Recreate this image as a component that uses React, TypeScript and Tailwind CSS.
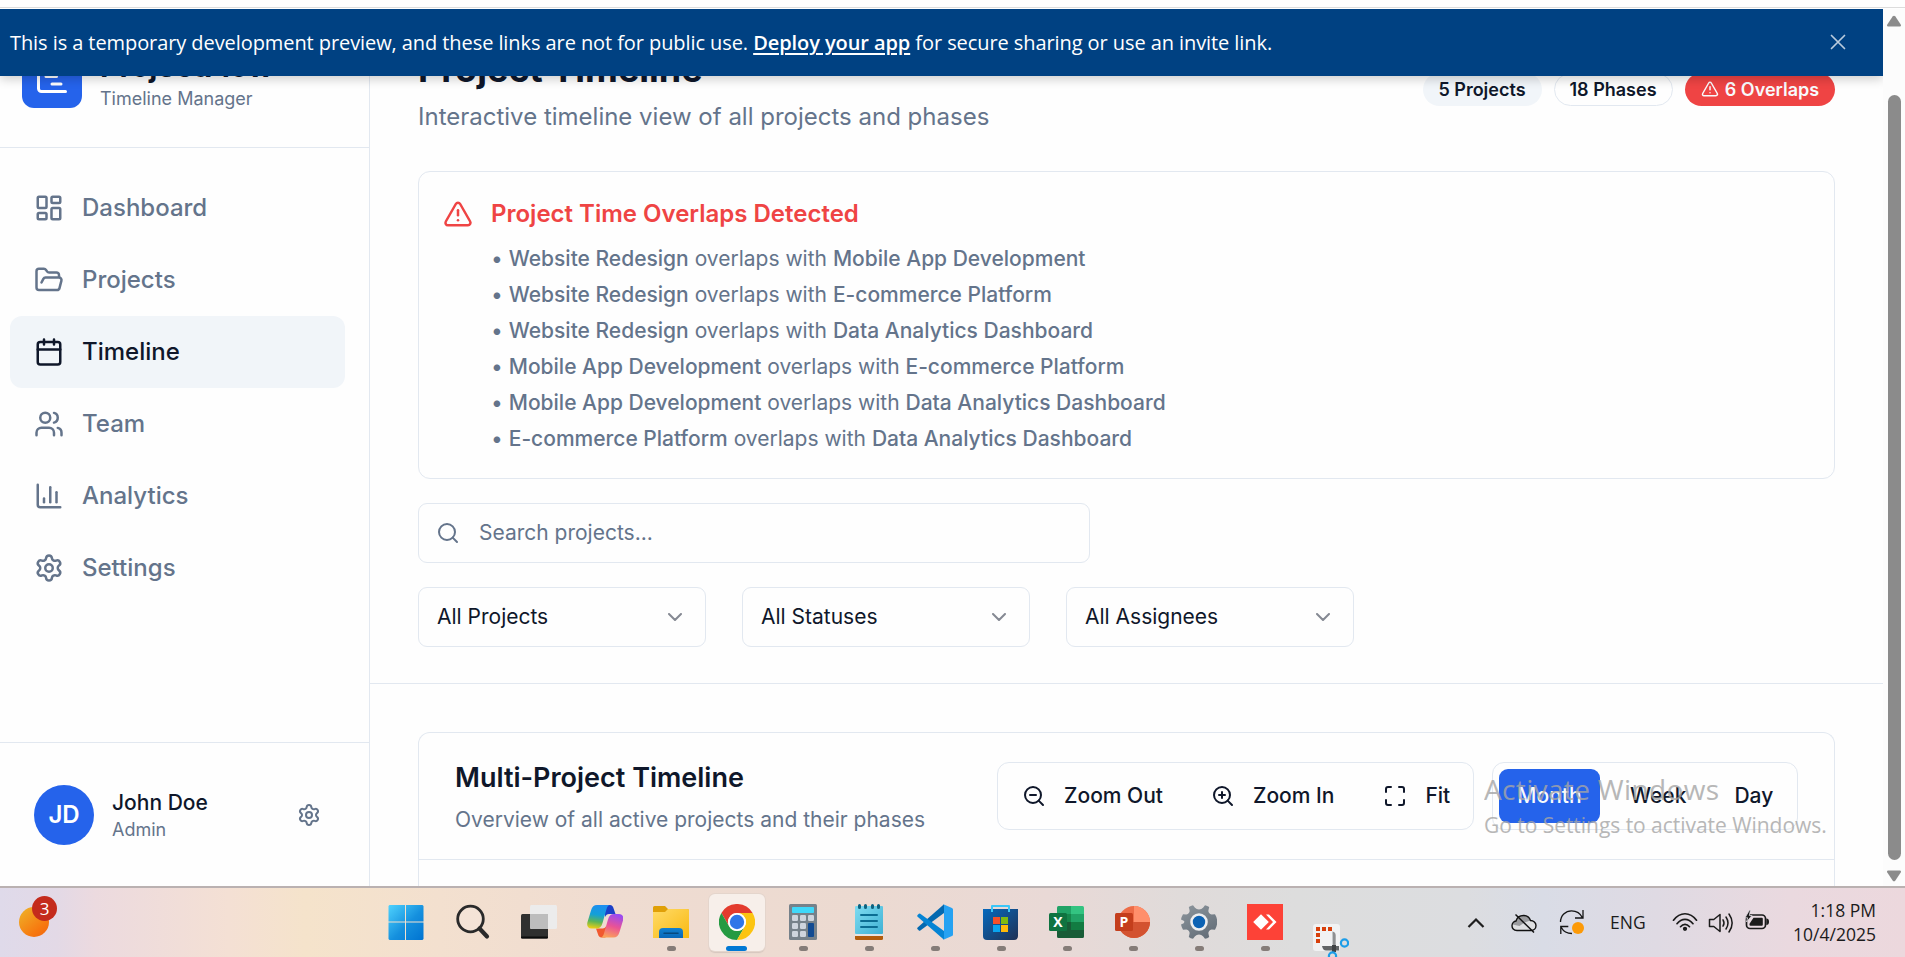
import type { ReactNode } from "react";
import {
  ChartColumn,
  ChevronDown,
  FolderOpen,
  LayoutDashboard,
  Maximize,
  Search,
  Settings,
  TriangleAlert,
  Users,
  ZoomIn,
  ZoomOut,
} from "lucide-react";

const overlaps: [string, string][] = [
  ["Website Redesign", "Mobile App Development"],
  ["Website Redesign", "E-commerce Platform"],
  ["Website Redesign", "Data Analytics Dashboard"],
  ["Mobile App Development", "E-commerce Platform"],
  ["Mobile App Development", "Data Analytics Dashboard"],
  ["E-commerce Platform", "Data Analytics Dashboard"],
];

function CalendarIcon() {
  return (
    <svg width="30" height="30" viewBox="0 0 24 24" fill="none" stroke="currentColor" strokeWidth="2" strokeLinecap="round" strokeLinejoin="round">
      <path d="M8 2v4M16 2v4M3 10h18" />
      <rect width="18" height="18" x="3" y="4" rx="2" />
    </svg>
  );
}

function NavItem({ icon, label, active = false }: { icon: ReactNode; label: string; active?: boolean }) {
  return (
    <div
      className={`flex h-[72px] w-[335px] items-center gap-[18px] rounded-[12px] pl-6 text-[24px] font-medium ${
        active ? "bg-[#f1f5f9] text-[#0f172a]" : "text-[#64748b]"
      }`}
    >
      {icon}
      <span>{label}</span>
    </div>
  );
}

function Sidebar() {
  return (
    <aside className="flex h-full w-[370px] shrink-0 flex-col border-r border-[#e2e8f0]">
      <div className="flex h-[139px] shrink-0 items-center gap-[18px] border-b border-[#e2e8f0] pl-[22px]">
        <div className="flex h-[60px] w-[60px] items-center justify-center rounded-[12px] bg-[#2563eb] text-white">
          <svg width="36" height="36" viewBox="0 0 24 24" fill="none" stroke="currentColor" strokeWidth="2" strokeLinecap="round" strokeLinejoin="round">
            <path d="M3 3v16a2 2 0 0 0 2 2h16" />
            <path d="M10 6h8M8 11h7M12 16h6" />
          </svg>
        </div>
        <div className="flex flex-col">
          <span className="text-[30px] leading-[42px] font-bold text-[#0f172a]">ProjectFlow</span>
          <span className="text-[18px] leading-[24px] text-[#64748b]">Timeline Manager</span>
        </div>
      </div>
      <nav className="flex flex-1 flex-col pt-6 pl-[10px]">
        <NavItem icon={<LayoutDashboard size={30} />} label="Dashboard" />
        <NavItem icon={<FolderOpen size={30} />} label="Projects" />
        <NavItem icon={<CalendarIcon />} label="Timeline" active />
        <NavItem icon={<Users size={30} />} label="Team" />
        <NavItem icon={<ChartColumn size={30} />} label="Analytics" />
        <NavItem icon={<Settings size={30} />} label="Settings" />
      </nav>
      <div className="flex h-[144px] shrink-0 items-center border-t border-[#e2e8f0] pr-[48px] pl-[34px]">
        <div className="flex h-[60px] w-[60px] items-center justify-center rounded-full bg-[#2563eb] text-[24px] font-semibold text-white">JD</div>
        <div className="ml-[18px] flex flex-1 flex-col">
          <span className="text-[21px] leading-[30px] font-medium text-[#0f172a]">John Doe</span>
          <span className="text-[18px] leading-[24px] text-[#64748b]">Admin</span>
        </div>
        <Settings size={24} className="text-[#64748b]" />
      </div>
    </aside>
  );
}

function SelectBox({ label }: { label: string }) {
  return (
    <div className="flex h-[60px] w-[288px] items-center justify-between rounded-[9px] border border-[#e2e8f0] pr-[18px] pl-[18px] text-[21px] text-[#0f172a]">
      <span>{label}</span>
      <ChevronDown size={24} className="opacity-50" />
    </div>
  );
}

function MainArea() {
  return (
    <main className="flex min-w-0 flex-1 flex-col">
      <header className="flex h-[675px] shrink-0 flex-col border-b border-[#e2e8f0] pt-[36px] pr-[48px] pl-[48px]">
        <div className="flex items-center justify-between">
          <div className="flex flex-col gap-[6px]">
            <h1 className="text-[36px] leading-[48px] font-bold text-[#0f172a]">Project Timeline</h1>
            <p className="text-[24px] leading-[36px] text-[#64748b]">Interactive timeline view of all projects and phases</p>
          </div>
          <div className="flex items-center gap-[12px] pb-[2px] text-[18px] font-semibold text-[#0f172a]">
            <span className="flex h-[33px] w-[119px] items-center justify-center rounded-full bg-[#f1f5f9] pr-[1px]">5 Projects</span>
            <span className="flex h-[33px] w-[119px] items-center justify-center rounded-full border border-[#e2e8f0] pr-[1px]">18 Phases</span>
            <span className="flex h-[33px] w-[150px] items-center justify-center gap-[6px] rounded-full bg-[#ef4444] text-[#f8fafc]">
              <TriangleAlert size={18} />
              6 Overlaps
            </span>
          </div>
        </div>

        <section className="mt-[36px] flex h-[308px] gap-[18px] rounded-[12px] border border-[#e2e8f0] pt-[27px] pl-[24px]">
          <TriangleAlert size={30} className="shrink-0 text-[#ef4444]" />
          <div className="flex flex-col">
            <h2 className="text-[24px] leading-[30px] font-semibold text-[#ef4444]">Project Time Overlaps Detected</h2>
            <ul className="mt-[15px] flex flex-col gap-[6px] text-[21px] leading-[30px] text-[#64748b]">
              {overlaps.map(([a, b]) => (
                <li key={a + b}>
                  • <span className="font-medium">{a}</span> overlaps with <span className="font-medium">{b}</span>
                </li>
              ))}
            </ul>
          </div>
        </section>

        <div className="mt-6 flex h-[60px] w-[672px] items-center gap-[19px] rounded-[9px] border border-[#e2e8f0] pl-[17px] text-[21px] text-[#64748b]">
          <Search size={24} />
          <span>Search projects...</span>
        </div>

        <div className="mt-6 flex gap-[36px]">
          <SelectBox label="All Projects" />
          <SelectBox label="All Statuses" />
          <SelectBox label="All Assignees" />
        </div>
      </header>

      <div className="flex flex-1 flex-col pt-[48px] pr-[48px] pl-[48px]">
        <div className="flex h-[180px] flex-col rounded-t-[12px] border border-b-0 border-[#e2e8f0]">
          <div className="flex h-[127px] items-center justify-between border-b border-[#e2e8f0] px-[36px]">
            <div className="flex flex-col gap-[6px]">
              <h2 className="text-[27px] leading-[42px] font-semibold text-[#0f172a]">Multi-Project Timeline</h2>
              <p className="text-[21px] leading-[30px] text-[#64748b]">Overview of all active projects and their phases</p>
            </div>
            <div className="flex gap-[18px] text-[21px] font-medium text-[#0f172a]">
              <div className="flex h-[68px] w-[477px] items-center rounded-[12px] border border-[#e2e8f0] pl-[24px]">
                <ZoomOut size={24} />
                <span className="ml-[18px]">Zoom Out</span>
                <ZoomIn size={24} className="ml-[48px]" />
                <span className="ml-[18px]">Zoom In</span>
                <Maximize size={24} className="ml-[49px]" />
                <span className="ml-[18px]">Fit</span>
              </div>
              <div className="flex h-[68px] w-[306px] items-center rounded-[12px] border border-[#e2e8f0] pl-[6px]">
                <span className="flex h-[54px] w-[101px] items-center justify-center rounded-[9px] bg-[#2563eb] text-[#f8fafc]">Month</span>
                <span className="ml-[30px]">Week</span>
                <span className="ml-[48px]">Day</span>
              </div>
            </div>
          </div>
        </div>
      </div>
    </main>
  );
}

function Banner() {
  return (
    <div className="absolute top-0 left-0 flex h-[67px] w-full items-center justify-between bg-[#004182] pr-[37px] pl-[10px] font-['Open_Sans',sans-serif] text-[20px] tracking-[-0.08px] text-white shadow-[0_3px_10px_rgba(0,0,0,0.2)]">
      <p className="pt-[1px]">
        This is a temporary development preview, and these links are not for public use.{" "}
        <span className="font-semibold underline decoration-2 underline-offset-[3px]">Deploy your app</span> for secure sharing or use an invite link.
      </p>
      <svg width="16" height="16" viewBox="0 0 16 16" fill="none" stroke="#b9cbdd" strokeWidth="1.700" strokeLinecap="round" className="mb-[2px]">
        <path d="M1.500 1.500l13 13M14.500 1.500l-13 13" />
      </svg>
    </div>
  );
}

function ScrollBar() {
  return (
    <div className="flex w-[22px] shrink-0 flex-col items-center bg-[#fcfcfc] pt-[6px]">
      <svg width="16" height="13" viewBox="0 0 16 13" fill="#8b8b8b">
        <path d="M6.600 1.500q1.400-1.700 2.800 0l5.300 7.900q.9 2-1 2.100h-11.400q-1.900-.1-1-2.100z" />
      </svg>
      <div className="mt-[67px] h-[765px] w-[13px] rounded-full bg-[#8b8b8b]" />
      <svg width="16" height="13" viewBox="0 0 16 13" fill="#8b8b8b" className="mt-[9px]">
        <path d="M6.600 11.500q1.400 1.700 2.800 0l5.300-7.900q.9-2-1-2.100h-11.400q-1.900.1-1 2.100z" />
      </svg>
    </div>
  );
}

function WindowsIcon() {
  return (
    <svg width="36" height="36" viewBox="0 0 36 36" className="mr-[3px]">
      <defs>
        <linearGradient id="win" x1="0" y1="0" x2="1" y2="1">
          <stop offset="0" stopColor="#4fd2fd" />
          <stop offset="0.55" stopColor="#1590de" />
          <stop offset="1" stopColor="#0073d1" />
        </linearGradient>
      </defs>
      <path fill="url(#win)" d="M1.500 1H17V17.500H.500V2zM18 1h16.500l1 1V17.500H18zM.500 18.500H17V36H1.500l-1-1zM18 18.500h17.500V35l-1 1H18z" />
    </svg>
  );
}

function SearchTaskIcon() {
  return (
    <svg width="36" height="36" viewBox="0 0 36 36" fill="none" stroke="#2a2a2a" className="mr-[2px]">
      <circle cx="16.500" cy="15" r="12.800" strokeWidth="2.800" fill="#fff" fillOpacity="0.15" />
      <path d="M25.500 24.500l7.500 8" strokeWidth="4.200" strokeLinecap="round" />
    </svg>
  );
}

function TaskViewIcon() {
  return (
    <svg width="36" height="36" viewBox="0 0 36 36">
      <rect x="0" y="10" width="27" height="24.500" rx="1.500" fill="#30302f" />
      <rect x="0" y="32.500" width="27" height="2" rx="1" fill="#0c0c0c" />
      <rect x="9" y="1" width="27" height="24" rx="1.500" fill="#ececec" />
      <path d="M9 10h18v15H10.500L9 23.500z" fill="#bdbdbd" />
    </svg>
  );
}

function CopilotIcon() {
  return (
    <svg width="36" height="36" viewBox="0 0 36 36">
      <defs>
        <linearGradient id="cpA" x1="0.4" y1="0" x2="0.25" y2="1">
          <stop offset="0" stopColor="#1d8ff0" />
          <stop offset="0.4" stopColor="#13a0d8" />
          <stop offset="0.7" stopColor="#5cb557" />
          <stop offset="1" stopColor="#f3d010" />
        </linearGradient>
        <linearGradient id="cpB" x1="0.6" y1="0" x2="0.3" y2="1">
          <stop offset="0" stopColor="#9a4bf0" />
          <stop offset="0.5" stopColor="#ea5395" />
          <stop offset="1" stopColor="#fba457" />
        </linearGradient>
      </defs>
      <path d="M18 1h5c2 0 3 1.500 3.600 3.500L28.500 10H22c-2 0-3 1-4 3z" fill="#1b40c8" />
      <path d="M18.500 33.500h-4c-2 0-3-1.500-3.600-3.500L9 24.500h6.500c2 0 3-1 4-3z" fill="#f1592f" />
      <path d="M10 1h13c-1.800 0-2.800 1.600-3.600 4.500L15.500 19c-1 3.800-3 5.500-6 5.500H4.500C.800 24.500-.500 21.500.500 18L4 6.500C5.100 2.800 7 1 10 1z" fill="url(#cpA)" />
      <path d="M26.500 33.500h-13c1.800 0 2.800-1.600 3.600-4.500L21 15.500c1-3.800 3-5.500 6-5.500h5c3.700 0 5 3 4 6.500L32.500 28c-1.100 3.700-3 5.500-6 5.500z" fill="url(#cpB)" />
    </svg>
  );
}

function ExplorerIcon() {
  return (
    <svg width="36" height="36" viewBox="0 0 36 36">
      <defs>
        <linearGradient id="fold" x1="0" y1="0" x2="1" y2="1">
          <stop offset="0" stopColor="#ffdb68" />
          <stop offset="1" stopColor="#f9b911" />
        </linearGradient>
        <linearGradient id="foldBlue" x1="0" y1="0" x2="0" y2="1">
          <stop offset="0" stopColor="#1281cf" />
          <stop offset="1" stopColor="#0a67b8" />
        </linearGradient>
      </defs>
      <path d="M0 3.500Q0 2 1.500 2H12l3 3h19.500Q36 5 36 6.500V12H0z" fill="#e0a008" />
      <path d="M0 8h12l3-3h19.500Q36 5 36 6.500V34H0z" fill="url(#fold)" />
      <path d="M6 34V28q0-4 4-4h16q4 0 4 4v6z" fill="url(#foldBlue)" />
      <path d="M11 29.300h14" stroke="#07497f" strokeWidth="1.500" strokeLinecap="round" />
    </svg>
  );
}

function ChromeIcon() {
  return (
    <svg width="36" height="36" viewBox="0 0 36 36">
      <path d="M18 9H33.600A18 18 0 0 0 2.400 9L10.200 22.500A9 9 0 0 1 18 9z" fill="#e33b2e" />
      <path d="M10.200 22.500L2.400 9A18 18 0 0 0 18 36L25.800 22.500A9 9 0 0 1 10.200 22.500z" fill="#259a42" />
      <path d="M25.800 22.500L18 36A18 18 0 0 0 33.600 9H18A9 9 0 0 1 25.800 22.500z" fill="#fcc411" />
      <circle cx="18" cy="18" r="9" fill="#fff" />
      <circle cx="18" cy="18" r="7.200" fill="#2f76e8" />
    </svg>
  );
}

function CalculatorIcon() {
  return (
    <svg width="36" height="36" viewBox="0 0 36 36">
      <rect x="4" y="0" width="28" height="36" rx="1.500" fill="#76818a" />
      <rect x="7" y="3" width="22" height="6" rx="0.800" fill="#3fd8fa" />
      <g fill="#ced4dd">
        <rect x="7" y="11" width="6" height="6" rx="1.200" />
        <rect x="15" y="11" width="6" height="6" rx="1.200" />
        <rect x="23" y="11" width="6" height="6" rx="1.200" />
        <rect x="7" y="19" width="6" height="6" rx="1.200" />
        <rect x="15" y="19" width="6" height="6" rx="1.200" />
        <rect x="7" y="27" width="6" height="6" rx="1.200" />
        <rect x="15" y="27" width="6" height="6" rx="1.200" />
      </g>
      <rect x="23" y="19" width="6" height="14" rx="1" fill="#114a92" />
    </svg>
  );
}

function NotepadIcon() {
  return (
    <svg width="36" height="36" viewBox="0 0 36 36">
      <defs>
        <linearGradient id="note" x1="0" y1="0" x2="1" y2="1">
          <stop offset="0" stopColor="#7fdcf1" />
          <stop offset="1" stopColor="#3fb1d4" />
        </linearGradient>
      </defs>
      <path d="M4 30h28v4.500q0 1.500-1.500 1.500h-25Q4 36 4 34.500z" fill="#b25c0c" />
      <rect x="4" y="28" width="28" height="4" fill="#e8e4e2" />
      <rect x="4" y="2" width="28" height="28" rx="1" fill="url(#note)" />
      <path d="M10 11h16M10 17h16M10 23h16" stroke="#0b6d93" strokeWidth="2" strokeLinecap="round" />
      <path d="M8.500 1.500v2M14.500 1.500v2M21.500 1.500v2M27.500 1.500v2" stroke="#0d6280" strokeWidth="3" strokeLinecap="round" />
    </svg>
  );
}

function VsCodeIcon() {
  return (
    <svg width="36" height="36" viewBox="0 0 36 36">
      <path d="M27 9V.200L.600 23.500q-.8.900 0 1.700l1.300 1.200q.7.500 1.400 0z" fill="#0469b0" />
      <path d="M27 27v8.700L.600 12.700q-.8-.9 0-1.700l1.300-1.200q.7-.5 1.400 0z" fill="#0584d4" />
      <path d="M26.300.300L35 4q1 .500 1 1.500v25q0 1-1 1.500l-8.700 3.700q.7-.5.700-1.700V2q0-1.200-.7-1.700z" fill="#26a2f2" />
    </svg>
  );
}

function StoreIcon() {
  return (
    <svg width="36" height="36" viewBox="0 0 36 36">
      <defs>
        <linearGradient id="store" x1="0" y1="0" x2="1" y2="1">
          <stop offset="0" stopColor="#0669bd" />
          <stop offset="1" stopColor="#1f3155" />
        </linearGradient>
      </defs>
      <path d="M0 5h35v27q0 4-4 4H4q-4 0-4-4z" fill="url(#store)" />
      <path d="M9 8V2h17v6" fill="none" stroke="#3bc6f7" strokeWidth="2" strokeLinejoin="round" />
      <rect x="10" y="13" width="7" height="7" fill="#f4502a" />
      <rect x="18" y="13" width="7" height="7" fill="#80ba10" />
      <rect x="10" y="21" width="7" height="7" fill="#09a4ef" />
      <rect x="18" y="21" width="7" height="7" fill="#ffb908" />
    </svg>
  );
}

function ExcelIcon() {
  return (
    <svg width="36" height="36" viewBox="0 0 36 36">
      <path d="M8 3.500Q8 2 9.500 2H22v8H8z" fill="#21a366" />
      <path d="M22 2h11.500Q35 2 35 3.500V10H22z" fill="#33c481" />
      <path d="M8 10h14v8H8z" fill="#16874b" />
      <path d="M22 10h13v8H22z" fill="#21a366" />
      <path d="M8 18h27v8H8z" fill="#127c42" />
      <path d="M8 18h14v8h13v6.500q0 1.500-1.500 1.500h-24Q8 34 8 32.500z" fill="#185c37" />
      <rect x="0" y="9" width="18" height="18" rx="1.500" fill="#0f7340" />
      <text x="9" y="23" textAnchor="middle" fontFamily="Open Sans, sans-serif" fontWeight="700" fontSize="14" fill="#fff">X</text>
    </svg>
  );
}

function PowerPointIcon() {
  return (
    <svg width="36" height="36" viewBox="0 0 36 36">
      <circle cx="19" cy="18" r="16" fill="#ed6c47" />
      <path d="M19 2a16 16 0 0 1 16 16H19z" fill="#ff8f6b" />
      <path d="M35 18a16 16 0 0 1-32 0z" fill="#d35230" />
      <rect x="0" y="9" width="18" height="18" rx="1.500" fill="#c43e1c" />
      <text x="9" y="23" textAnchor="middle" fontFamily="Open Sans, sans-serif" fontWeight="700" fontSize="14" fill="#fff">P</text>
    </svg>
  );
}

function GearIcon() {
  return (
    <svg width="36" height="36" viewBox="0 0 36 36">
      <defs>
        <linearGradient id="gear" x1="0" y1="0" x2="0.6" y2="1">
          <stop offset="0" stopColor="#8d969d" />
          <stop offset="1" stopColor="#66707a" />
        </linearGradient>
      </defs>
      <path
        d="M12 1.200q-2.400.6-4.200 1.900L8.600 6.500q.2 1.300-.7 2.600-.9 1.300-2.600 1.500L2 10.300Q.6 12.500 0 15.500l2.700 1.200q1.500.9 0 2.600L0 20.500q.6 3 2 5.200l3.300-.3q1.700.2 2.600 1.500.9 1.300.7 2.600l-.8 3.400q1.800 1.300 4.200 1.900l2-2.600q1.500-1.600 4-1.600t4 1.600l2 2.600q2.400-.6 4.200-1.900l-.8-3.400q-.2-1.300.7-2.600.9-1.300 2.600-1.500l3.300.3q1.400-2.200 2-5.200v-5q-.6-3-2-5.200l-3.300.3q-1.700-.2-2.600-1.500-.9-1.300-.7-2.600l.8-3.400Q26.400 1.800 24 1.200l-2 2.600q-1.500 1.600-4 1.600t-4-1.600z"
        fill="url(#gear)"
      />
      <circle cx="18" cy="18" r="7.500" fill="#0b62b4" stroke="#edeef0" strokeWidth="2.600" />
    </svg>
  );
}

function AnyDeskIcon() {
  return (
    <svg width="36" height="36" viewBox="0 0 36 36">
      <rect width="36" height="36" fill="#fd4237" />
      <path d="M14 10.200L21.800 18 14 25.800 6.200 18z" fill="#fff" />
      <path d="M19 10.500h3L29.500 18 22 25.500h-3L26 18z" fill="#fff" />
    </svg>
  );
}

function SnipIcon() {
  return (
    <svg width="36" height="36" viewBox="0 0 36 36">
      <rect x="0" y="0" width="27" height="27" rx="3" fill="#f1f2f3" />
      <path d="M3 3h4v4H3zM9 3h4v4H9zM15 3h4v4h-4zM3 9h4v4H3zM3 15h4v4H3z" fill="#d8400c" />
      <path d="M19.500 7.500q3.200.5 3.200 4V25h-3z" fill="#8e9092" />
      <path d="M9 22h17v4.500H13q-3 0-4-4.500z" fill="#616466" />
      <path d="M19 21h4v7h-4z" fill="#3f4244" />
      <circle cx="31.500" cy="19" r="3.600" fill="none" stroke="#1c9de8" strokeWidth="2.200" />
      <circle cx="19.500" cy="32" r="3.600" fill="none" stroke="#1c9de8" strokeWidth="2.200" />
    </svg>
  );
}

const taskItems: { id: string; icon: ReactNode; dot: boolean; active?: boolean; low?: boolean }[] = [
  { id: "start", icon: <WindowsIcon />, dot: false },
  { id: "search", icon: <SearchTaskIcon />, dot: false },
  { id: "views", icon: <TaskViewIcon />, dot: false },
  { id: "copilot", icon: <CopilotIcon />, dot: false },
  { id: "files", icon: <ExplorerIcon />, dot: true },
  { id: "chrome", icon: <ChromeIcon />, dot: false, active: true },
  { id: "calc", icon: <CalculatorIcon />, dot: true },
  { id: "notes", icon: <NotepadIcon />, dot: true },
  { id: "code", icon: <VsCodeIcon />, dot: true },
  { id: "store", icon: <StoreIcon />, dot: true },
  { id: "excel", icon: <ExcelIcon />, dot: true },
  { id: "slides", icon: <PowerPointIcon />, dot: true },
  { id: "settings", icon: <GearIcon />, dot: true },
  { id: "remote", icon: <AnyDeskIcon />, dot: true },
  { id: "snip", icon: <SnipIcon />, dot: false, low: true },
];

function Tray() {
  return (
    <div className="flex h-full items-center font-['Open_Sans',sans-serif] text-[17.500px] text-[#1b1b1b]">
      <svg width="18" height="12" viewBox="0 0 18 12" fill="none" stroke="#1f1f1f" strokeWidth="2.200">
        <path d="M1.500 10L9 2.500l7.500 7.500" />
      </svg>
      <svg width="26" height="22" viewBox="0 0 26 22" fill="none" className="ml-[26px]">
        <path d="M6 18.500C2.500 18.500 1 16 1 13.700 1 11 3 9.200 5 9c1-3.500 4-5.500 7.500-5.500 3.500 0 6 2 7 5 3 0 5.500 2.200 5.500 5s-2 5-5 5z" fill="#dfe0e2" />
        <path d="M1.500 12.500C2 10 3.500 9.200 5 9c1-3.500 4-5.500 7.500-5.500 3.500 0 6 2 7 5l-6 2-5 3.500z" fill="#9b9c9f" />
        <path d="M6 18.500C2.500 18.500 1 16 1 13.700 1 11 3 9.200 5 9c1-3.500 4-5.500 7.500-5.500 3.500 0 6 2 7 5 3 0 5.500 2.200 5.500 5s-2 5-5 5z" stroke="#111" strokeWidth="1.400" />
        <path d="M4.500 2.500l18.500 18" stroke="#111" strokeWidth="1.500" />
      </svg>
      <svg width="26" height="26" viewBox="0 0 26 26" fill="none" stroke="#151515" strokeWidth="1.300" className="mb-[2px] ml-[22px]">
        <path d="M1.500 13C1.500 6.500 6.500 1.800 12.500 1.800c5 0 9 2.700 11 7M24 1v8h-8" />
        <path d="M1.800 25v-7.500h7.500M2.300 18.500c2 3.800 6 6 10.700 6" />
        <circle cx="19" cy="19" r="6" fill="#fc9a08" stroke="none" />
      </svg>
      <span className="ml-[25px] w-[37px]">ENG</span>
      <svg width="26" height="20" viewBox="0 0 26 20" fill="none" stroke="#1b1b1b" strokeWidth="1.700" strokeLinecap="round" className="mb-[2px] ml-[25px]">
        <path d="M1.500 8.200C8-.400 18-.400 24.500 8.200" />
        <path d="M5 11.700c4.600-5.900 11.400-5.900 16 0" />
        <path d="M8.500 14.700c2.700-3.200 6.300-3.200 9 0" />
        <circle cx="13" cy="16.800" r="1.300" fill="#1b1b1b" />
      </svg>
      <svg width="26" height="22" viewBox="0 0 26 22" fill="none" stroke="#1b1b1b" strokeWidth="1.500" strokeLinecap="round" strokeLinejoin="round" className="ml-[10px]">
        <path d="M1.500 7.500h4.300L12 2.500v17l-6.200-5H1.500z" />
        <path d="M15 7.800q2 3.200 0 6.400" />
        <path d="M18 5q4 6 0 12" />
        <path d="M21 2q6.300 9 0 18" />
      </svg>
      <svg width="26" height="22" viewBox="0 0 26 22" className="mb-[3px] ml-[10px]">
        <rect x="2.500" y="5" width="19" height="13.500" rx="3.500" fill="none" stroke="#1b1b1b" strokeWidth="1.700" />
        <path d="M9.500 7.800h8.300q1 0 1 1v6q0 1-1 1H6.500q-1 0-1-1v-1z" fill="#1b1b1b" />
        <path d="M22.300 8.500q2.700 0 2.700 3.200t-2.700 3.200z" fill="#1b1b1b" />
        <path d="M5.500 0L1 7.800h2.600L2.500 12 8 5.500H5.300L6.500 0z" fill="#1b1b1b" stroke="#dfdae2" strokeWidth="0.800" />
      </svg>
      <div className="ml-[14px] flex w-[92px] flex-col items-end pb-[1px] leading-[24px]">
        <span>1:18 PM</span>
        <span>10/4/2025</span>
      </div>
    </div>
  );
}

function Taskbar() {
  return (
    <footer className="flex h-[71px] shrink-0 border-t-2 border-[#bab1b1] bg-[linear-gradient(90deg,#dfdaea_0%,#e3d9e6_3%,#ecdadf_5%,#f4e0d4_12%,#f5e3cb_16%,#f3e0cf_23%,#efdcd1_32%,#ecdad1_45%,#e9d9d6_55%,#e0dbda_62%,#dddddd_68%,#dcdde0_77%,#d9dce6_81%,#dfdae3_87%,#ead9df_94%,#ecd8dd_100%)]">
      <div className="flex w-[374px] shrink-0 pt-[16px] pl-[18px]">
        <div className="relative h-[36px] w-[42px]">
          <div className="absolute top-[3px] left-[1px] h-[30px] w-[30px] rounded-full bg-[linear-gradient(140deg,#eeb62b,#f7780f_70%,#f0640f)]" />
          <div className="absolute top-[-8px] left-[14px] flex h-[25px] w-[25px] items-center justify-center rounded-full bg-[#c42b1c] font-['Open_Sans',sans-serif] text-[17px] text-white">3</div>
        </div>
      </div>
      <div className="flex">
        {taskItems.map((t) => (
          <div key={t.id} className="flex w-[66px] justify-center pt-[6px]">
            <div className={`relative flex h-[57px] w-[56px] justify-center rounded-[6px] pt-[10px] ${t.active ? "bg-[#f7efea] shadow-[0_0_0_1px_#e4d5cc,0_2px_1px_#d5c6be]" : ""}`}>
              <div className={t.low ? "pt-[20px]" : ""}>{t.icon}</div>
              {t.dot && <div className="absolute bottom-0 left-[24px] h-[5px] w-[9px] rounded-full bg-[#857c78]" />}
              {t.active && <div className="absolute bottom-0 left-[17px] h-[5px] w-[21px] rounded-full bg-[#0078d4]" />}
            </div>
          </div>
        ))}
      </div>
      <div className="ml-auto pr-[29px]">
        <Tray />
      </div>
    </footer>
  );
}

export default function App() {
  return (
    <div className="relative flex h-[957px] w-[1905px] flex-col overflow-hidden bg-[#fefefe] font-['Inter',sans-serif]">
      <div className="h-[9px] shrink-0 pt-[7px]">
        <div className="h-px bg-[#dcdcdc]" />
      </div>
      <div className="flex h-[877px] shrink-0">
        <div className="relative flex w-[1883px] shrink-0 overflow-hidden">
          <Sidebar />
          <MainArea />
          <Banner />
        </div>
        <ScrollBar />
      </div>
      <Taskbar />
      <div className="absolute top-[769px] left-[1484px] flex flex-col font-['Open_Sans',sans-serif] whitespace-nowrap text-[#a6a6a6] opacity-80">
        <span className="text-[28px] leading-[40px] tracking-[0.35px]">Activate Windows</span>
        <span className="text-[21px] leading-[32px] tracking-[-0.04px]">Go to Settings to activate Windows.</span>
      </div>
    </div>
  );
}
